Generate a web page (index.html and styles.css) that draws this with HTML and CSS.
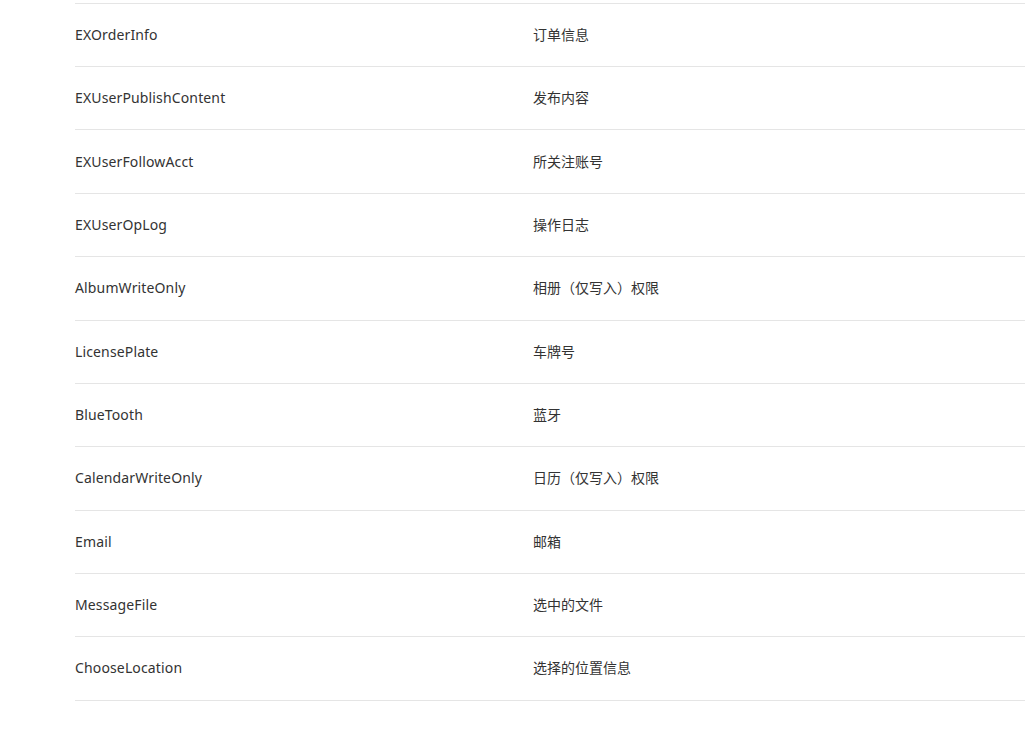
FILE: index.html
```html
<!DOCTYPE html>
<html lang="zh">
<head>
<meta charset="utf-8">
<title>权限列表</title>
<link rel="stylesheet" href="styles.css">
</head>
<body>
<div class="list">
  <div class="row"><span class="key">EXOrderInfo</span><span class="desc">订单信息</span></div>
  <div class="row"><span class="key">EXUserPublishContent</span><span class="desc">发布内容</span></div>
  <div class="row"><span class="key">EXUserFollowAcct</span><span class="desc">所关注账号</span></div>
  <div class="row"><span class="key">EXUserOpLog</span><span class="desc">操作日志</span></div>
  <div class="row"><span class="key">AlbumWriteOnly</span><span class="desc">相册（仅写入）权限</span></div>
  <div class="row"><span class="key">LicensePlate</span><span class="desc">车牌号</span></div>
  <div class="row"><span class="key">BlueTooth</span><span class="desc">蓝牙</span></div>
  <div class="row"><span class="key">CalendarWriteOnly</span><span class="desc">日历（仅写入）权限</span></div>
  <div class="row"><span class="key">Email</span><span class="desc">邮箱</span></div>
  <div class="row"><span class="key">MessageFile</span><span class="desc">选中的文件</span></div>
  <div class="row"><span class="key">ChooseLocation</span><span class="desc">选择的位置信息</span></div>
</div>
</body>
</html>
```
FILE: styles.css
```css
html, body {
  margin: 0;
  padding: 0;
  background: #fff;
  overflow: hidden;
}
body {
  font-family: "Noto Sans", "Noto Sans CJK SC", sans-serif;
  font-size: 14px;
  color: #333;
}
.list {
  margin-left: 75px;
  padding-top: 2.8px;
  width: 1000px;
}
.row {
  box-sizing: border-box;
  display: grid;
  grid-template-columns: 458px 1fr;
  align-items: center;
  height: 63.35px;
  border-top: 1px solid #e5e5e5;
}
.row:last-child {
  border-bottom: 1px solid #e5e5e5;
  height: 64.35px;
}
.key, .desc {
  line-height: 22px;
}
.key {
  letter-spacing: 0.14px;
}
```
